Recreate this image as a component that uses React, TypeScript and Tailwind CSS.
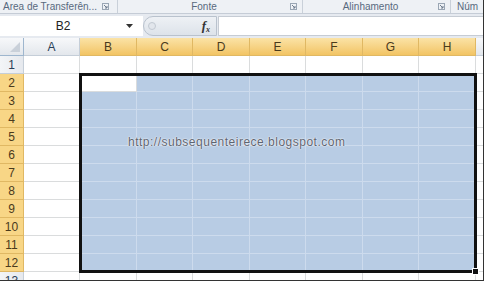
const cols = ["A", "B", "C", "D", "E", "F", "G", "H"];
const rows = Array.from({ length: 13 }, (_, i) => i + 1);

function Launcher() {
  return (
    <svg width="7" height="7" viewBox="0 0 7 7" className="shrink-0">
      <rect x="0.5" y="0.5" width="6" height="6" fill="none" stroke="#9aa6b4" />
      <path d="M2 2 L5 5 M5 3 V5 H3" stroke="#6f7d8e" fill="none" />
    </svg>
  );
}

function RibbonLabels() {
  return (
    <div className="flex h-[14px] shrink-0 items-center border-b border-[#c5ccd6] bg-[#eef1f5] text-[10px] leading-none text-[#58697e]">
      <div className="flex h-full w-[118px] items-center justify-between border-r border-[#c9d0d9] pl-[3px] pr-[8px]">
        <span>Area de Transferên...</span>
        <Launcher />
      </div>
      <div className="flex h-full w-[185px] items-center border-r border-[#c9d0d9] pr-[5px]">
        <span className="flex-1 text-center">Fonte</span>
        <Launcher />
      </div>
      <div className="flex h-full w-[148px] items-center border-r border-[#c9d0d9] pr-[5px]">
        <span className="flex-1 text-center">Alinhamento</span>
        <Launcher />
      </div>
      <div className="pl-[6px]">Núm</div>
    </div>
  );
}

function FormulaBar() {
  return (
    <div className="flex h-[24px] shrink-0 items-center bg-[#e6eaf0] py-[2px]">
      <div className="flex h-[20px] w-[143px] items-center bg-white text-[12px] text-[#222]">
        <span className="w-[126px] text-center">B2</span>
        <svg width="7" height="4" viewBox="0 0 7 4">
          <path d="M0 0 H7 L3.5 4 Z" fill="#333" />
        </svg>
      </div>
      <div className="flex h-[20px] w-[74px] items-center justify-between rounded-l-full border border-[#b9c2cd] bg-gradient-to-b from-[#eef1f5] to-[#dde3ea] pl-[4px] pr-[6px]">
        <div className="h-[8px] w-[8px] rounded-full border border-[#c2c9d2] bg-[#e2e6ec]" />
        <span className="font-['Liberation_Serif'] text-[13px] font-bold italic text-[#333]">
          f<sub className="text-[8px]">x</sub>
        </span>
      </div>
      <div className="ml-[1px] h-[20px] flex-1 border-y border-l border-[#c6ccd4] bg-white" />
    </div>
  );
}

function Sheet() {
  const inSel = (r: number, c: number) => r >= 2 && r <= 12 && c >= 1;
  return (
    <div className="relative flex-1 overflow-hidden bg-white">
      <div className="grid grid-cols-[24px_56px_57px_56px_57px_56px_57px_56px_57px_1fr] auto-rows-[18px] font-['Liberation_Sans',sans-serif] text-[12px]">
        {/* header row */}
        <div className="relative border-b border-r border-[#9eb6ce] bg-gradient-to-b from-[#f7f8fa] to-[#e3e7ec]">
          <svg width="10" height="10" viewBox="0 0 10 10" className="absolute bottom-[3px] right-[3px]">
            <path d="M10 0 V10 H0 Z" fill="#c9d0d9" />
          </svg>
        </div>
        {cols.map((c, i) => (
          <div
            key={c}
            className={
              i === 0
                ? "flex items-center justify-center border-b border-r border-[#c5ced8] bg-gradient-to-b from-[#f7f8fa] to-[#e3e7ec] text-[#2a3f58]"
                : "flex items-center justify-center border-b border-r border-[#e0b863] bg-gradient-to-b from-[#fbe3a6] to-[#f2c463] text-[#4a3a1c]"
            }
          >
            {c}
          </div>
        ))}
        <div className="border-b border-[#c5ced8] bg-gradient-to-b from-[#f7f8fa] to-[#e3e7ec]" />

        {rows.map((r) => (
          <div key={r} className="contents">
            <div
              className={
                r >= 2 && r <= 12
                  ? "flex items-center justify-center border-b border-r border-[#e0b863] bg-[#f8d686] text-[#4a3a1c]"
                  : "flex items-center justify-center border-b border-r border-[#c5ced8] bg-gradient-to-r from-[#f3f5f7] to-[#e6e9ee] text-[#2a3f58]"
              }
            >
              {r}
            </div>
            {cols.map((c, ci) => (
              <div
                key={c}
                className={
                  inSel(r, ci) && !(r === 2 && ci === 1)
                    ? "border-b border-r border-[#cddbed] bg-[#b8cce4]"
                    : "border-b border-r border-[#dadcdd] bg-white"
                }
              />
            ))}
            <div className="border-b border-[#dadcdd] bg-white" />
          </div>
        ))}
      </div>

      {/* selection border */}
      <div className="pointer-events-none absolute left-[79px] top-[35px] h-[200px] w-[398px] border-[3px] border-[#111]">
        <div className="absolute -bottom-[5px] -right-[5px] h-[7px] w-[7px] border border-white bg-[#111]" />
      </div>

      {/* watermark text */}
      <div className="pointer-events-none absolute left-[128px] top-[95px] font-['Liberation_Sans',sans-serif] text-[12px] tracking-[0.5px] text-[#5e6470] [text-shadow:0_0_2px_#fff,0_0_1px_#fff]">
        http://subsequenteirece.blogspot.com
      </div>
    </div>
  );
}

export default function App() {
  return (
    <div className="flex h-[281px] w-[484px] flex-col overflow-hidden border-b border-r border-[#333] bg-white font-['Liberation_Sans',sans-serif]">
      <RibbonLabels />
      <FormulaBar />
      <Sheet />
    </div>
  );
}
